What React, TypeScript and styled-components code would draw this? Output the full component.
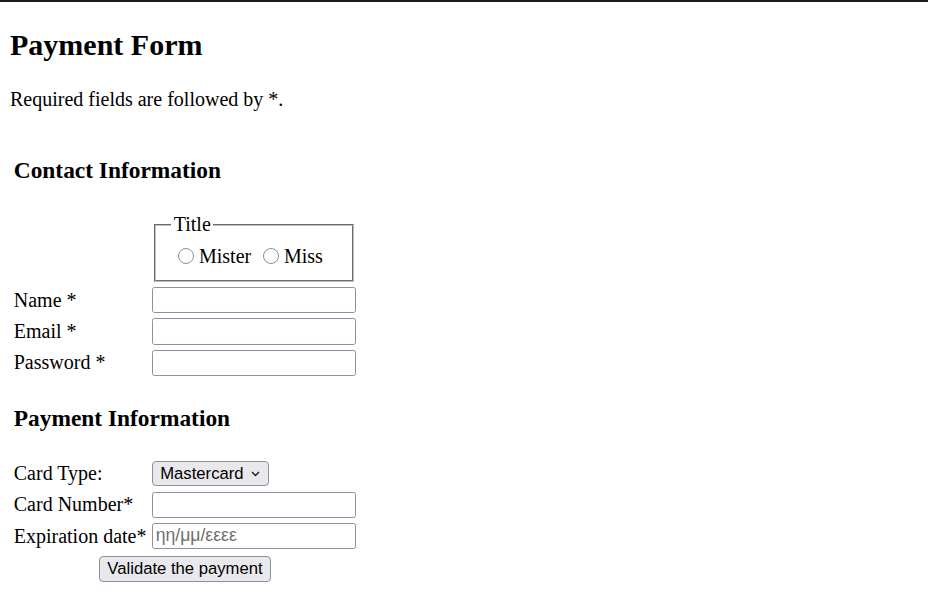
import React from "react";
import styled, { createGlobalStyle } from "styled-components";

const GlobalStyle = createGlobalStyle`
  html, body { margin: 0; padding: 0; background: #ffffff; }
  body {
    font-family: "Liberation Serif", "Times New Roman", serif;
    color: #000000;
  }
`;

const Page = styled.main`
  border-top: 2px solid #1c1c1c;
  padding: 0 10px 20px;
`;

const Title = styled.h1`
  margin: 25.5px 0 0;
  font-size: 30px;
  line-height: 34.5px;
  font-weight: 700;
`;

const Intro = styled.p`
  margin: 26.4px 0 16.7px;
  font-size: 20px;
  line-height: 23px;
`;

const Form = styled.form`
  display: grid;
  grid-template-columns: max-content 204px;
  grid-auto-rows: minmax(26.25px, auto);
  column-gap: 5.75px;
  row-gap: 5px;
  padding: 3.75px;
  width: max-content;
  align-items: center;
`;

const SectionHeading = styled.h3<{ $gapTop: number; $gapBottom: number }>`
  grid-column: 1 / -1;
  margin: ${(p) => p.$gapTop}px 0 ${(p) => p.$gapBottom}px;
  font-size: 23.4px;
  line-height: 26.9px;
  font-weight: 700;
`;

const FieldLabel = styled.label`
  grid-column: 1;
  font-size: 20px;
  line-height: 23px;
  white-space: nowrap;
`;

const TitleSet = styled.fieldset`
  grid-column: 2;
  margin: 2.5px 2.5px 0.5px 2px;
  padding: 8.5px 15px 12px;
  border: 2px groove #c0c0c0;
  min-width: 0;
`;

const Legend = styled.legend`
  padding: 0 2.5px;
  font-size: 20px;
  line-height: 23px;
`;

const RadioRow = styled.div`
  display: flex;
  align-items: center;
  font-size: 20px;
  line-height: 23px;
`;

const RadioOption = styled.label`
  display: inline-flex;
  align-items: center;
  & + & {
    margin-left: 5px;
  }
`;

const Radio = styled.input`
  appearance: none;
  box-sizing: border-box;
  width: 16.25px;
  height: 16.25px;
  margin: 0 4.5px 0 7px;
  border: 1px solid #8f8f9d;
  border-radius: 50%;
  background: #ffffff;
`;

const TextInput = styled.input`
  grid-column: 2;
  box-sizing: border-box;
  width: 204px;
  height: 26.25px;
  padding: 1.25px 2.5px;
  border: 1px solid #8f8f9d;
  border-radius: 2.5px;
  background: #ffffff;
  font-family: "Liberation Sans", Arial, sans-serif;
  font-size: 16.67px;
  color: #000000;
  &::placeholder {
    color: #6f6f6f;
    font-size: 17.6px;
  }
`;

const SelectWrap = styled.div`
  grid-column: 2;
  justify-self: start;
  position: relative;
  display: inline-flex;
`;

const Select = styled.select`
  appearance: none;
  box-sizing: border-box;
  width: 117px;
  height: 25px;
  padding: 0 20px 0 7px;
  border: 1px solid #8f8f9d;
  border-radius: 4px;
  background: #e9e9ed;
  font-family: "Liberation Sans", Arial, sans-serif;
  font-size: 16.67px;
  color: #000000;
`;

const Chevron = styled.svg`
  position: absolute;
  right: 9px;
  top: 50%;
  transform: translateY(-50%);
  pointer-events: none;
`;

const SubmitButton = styled.button`
  grid-column: 1 / -1;
  justify-self: center;
  box-sizing: border-box;
  height: 26.4px;
  margin-top: 1.5px;
  padding: 0 7px;
  border: 1px solid #8f8f9d;
  border-radius: 4px;
  background: #e9e9ed;
  font-family: "Liberation Sans", Arial, sans-serif;
  font-size: 16.67px;
  color: #000000;
`;

export default function App() {
  return (
    <>
      <GlobalStyle />
      <Page>
        <section>
          <Title>Payment Form</Title>
          <Intro>Required fields are followed by *.</Intro>
          <Form onSubmit={(e) => e.preventDefault()}>
            <SectionHeading $gapTop={25.4} $gapBottom={21.4}>
              Contact Information
            </SectionHeading>
            <TitleSet>
              <Legend>Title</Legend>
              <RadioRow>
                <RadioOption>
                  <Radio type="radio" name="title" value="mister" />
                  Mister
                </RadioOption>
                <RadioOption>
                  <Radio type="radio" name="title" value="miss" />
                  Miss
                </RadioOption>
              </RadioRow>
            </TitleSet>
            <FieldLabel htmlFor="name">Name *</FieldLabel>
            <TextInput id="name" type="text" />
            <FieldLabel htmlFor="email">Email *</FieldLabel>
            <TextInput id="email" type="email" />
            <FieldLabel htmlFor="pwd">Password *</FieldLabel>
            <TextInput id="pwd" type="password" />

            <SectionHeading $gapTop={24.4} $gapBottom={23.4}>
              Payment Information
            </SectionHeading>
            <FieldLabel htmlFor="card">Card Type:</FieldLabel>
            <SelectWrap>
              <Select id="card" defaultValue="mc">
                <option value="visa">Visa</option>
                <option value="mc">Mastercard</option>
                <option value="amex">American Express</option>
              </Select>
              <Chevron width="9" height="6" viewBox="0 0 9 6">
                <path d="M1 1 L4.5 4.5 L8 1" fill="none" stroke="#1a1a1a" strokeWidth="1.4" />
              </Chevron>
            </SelectWrap>
            <FieldLabel htmlFor="number">Card Number*</FieldLabel>
            <TextInput id="number" type="text" />
            <FieldLabel htmlFor="exp">Expiration date*</FieldLabel>
            <TextInput id="exp" type="text" placeholder="ηη/μμ/εεεε" />
            <SubmitButton type="submit">Validate the payment</SubmitButton>
          </Form>
        </section>
      </Page>
    </>
  );
}
